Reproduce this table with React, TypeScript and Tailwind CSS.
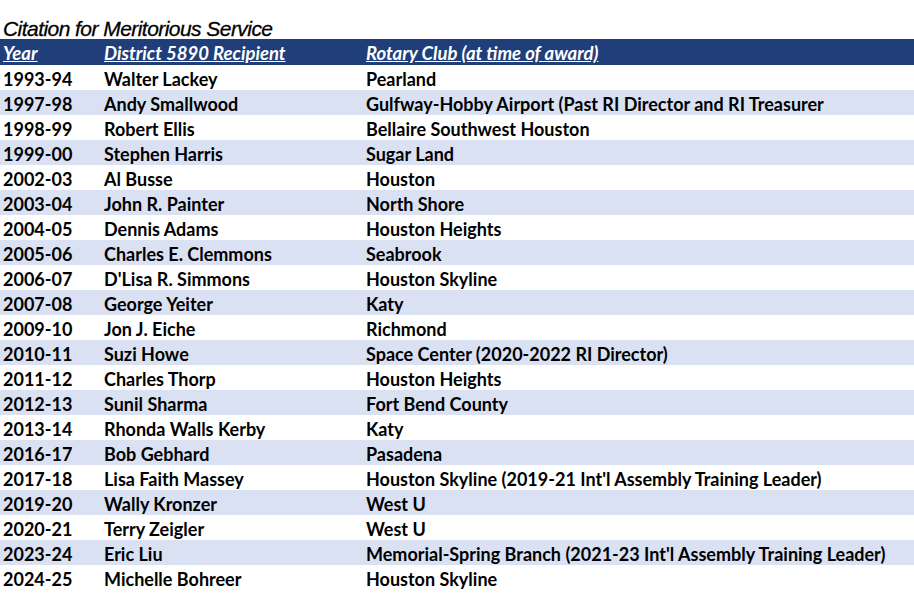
import React from "react";

const rows: [string, string, string][] = [
  ["1993-94", "Walter Lackey", "Pearland"],
  ["1997-98", "Andy Smallwood", "Gulfway-Hobby Airport (Past RI Director and RI Treasurer"],
  ["1998-99", "Robert Ellis", "Bellaire Southwest Houston"],
  ["1999-00", "Stephen Harris", "Sugar Land"],
  ["2002-03", "Al Busse", "Houston"],
  ["2003-04", "John R. Painter", "North Shore"],
  ["2004-05", "Dennis Adams", "Houston Heights"],
  ["2005-06", "Charles E. Clemmons", "Seabrook"],
  ["2006-07", "D'Lisa R. Simmons", "Houston Skyline"],
  ["2007-08", "George Yeiter", "Katy"],
  ["2009-10", "Jon J. Eiche", "Richmond"],
  ["2010-11", "Suzi Howe", "Space Center (2020-2022 RI Director)"],
  ["2011-12", "Charles Thorp", "Houston Heights"],
  ["2012-13", "Sunil Sharma", "Fort Bend County"],
  ["2013-14", "Rhonda Walls Kerby", "Katy"],
  ["2016-17", "Bob Gebhard", "Pasadena"],
  ["2017-18", "Lisa Faith Massey", "Houston Skyline (2019-21 Int'l Assembly Training Leader)"],
  ["2019-20", "Wally Kronzer", "West U"],
  ["2020-21", "Terry Zeigler", "West U"],
  ["2023-24", "Eric Liu", "Memorial-Spring Branch (2021-23 Int'l Assembly Training Leader)"],
  ["2024-25", "Michelle Bohreer", "Houston Skyline"],
];

export default function App() {
  return (
    <div className="w-[914px] h-[594px] overflow-hidden bg-white font-['Lato',sans-serif]">
      <div className="h-[39px] flex items-end pl-[3px] pb-[0px]">
        <h1 className="font-['Liberation_Sans',Arial,sans-serif] italic text-[21px] tracking-[-0.55px] leading-none text-black [-webkit-text-stroke:0.3px_black]">
          Citation for Meritorious Service
        </h1>
      </div>
      <div className="flex h-[26px] items-center bg-[#203f7a] text-white font-bold italic underline text-[18.5px] leading-none pt-[2px]">
        <div className="w-[104px] pl-[3px]">Year</div>
        <div className="w-[262px]">District 5890 Recipient</div>
        <div className="flex-1">Rotary Club (at time of award)</div>
      </div>
      {rows.map((r, i) => (
        <div
          key={r[0]}
          className={`flex h-[25px] items-center pt-[3px] font-bold text-[18px] leading-none text-black ${i % 2 === 1 ? "bg-[#d9e1f2]" : "bg-white"}`}
        >
          <div className="w-[104px] pl-[3px] whitespace-nowrap">{r[0]}</div>
          <div className="w-[262px] whitespace-nowrap">{r[1]}</div>
          <div className="flex-1 whitespace-nowrap">{r[2]}</div>
        </div>
      ))}
    </div>
  );
}
